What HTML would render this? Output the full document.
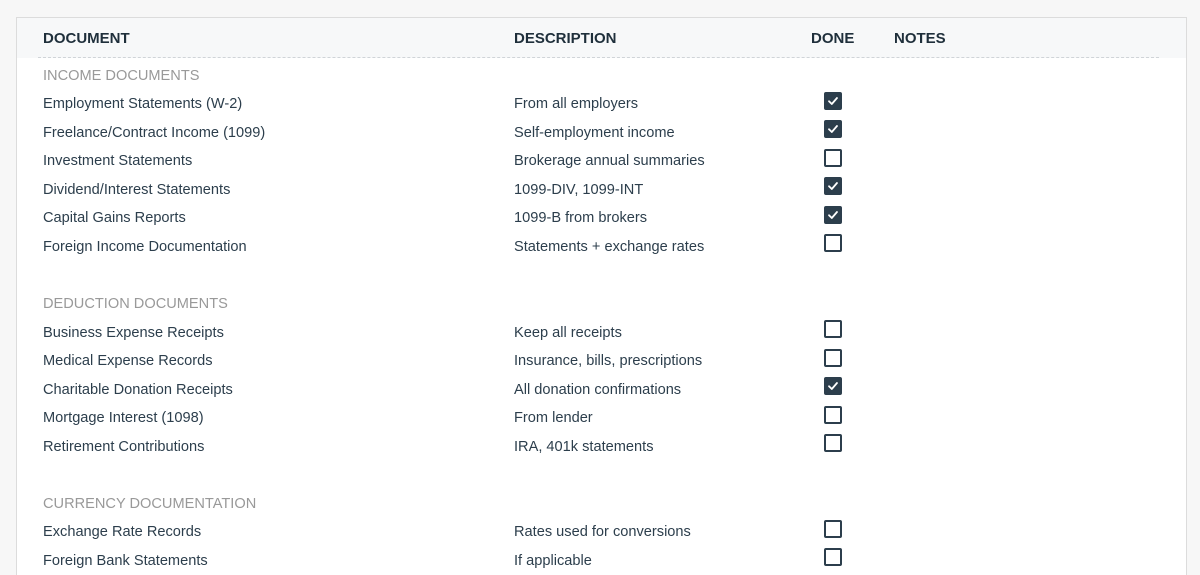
<!DOCTYPE html>
<html style="overflow:hidden;height:575px"><head><meta charset="utf-8"><style>
*{margin:0;padding:0;box-sizing:border-box}
body{width:1200px;height:575px;background:#f7f7f7;font-family:"Liberation Sans",sans-serif;overflow:hidden;position:relative}
.card{position:absolute;left:16px;top:17px;width:1171px;height:570px;background:#fff;border:1px solid #dcdcdc;border-bottom:none}
.head{position:absolute;left:0;top:0;width:100%;height:40px;background:#f7f8f9}
.dash{position:absolute;left:21px;top:39px;width:1121px;border-top:1px dashed #d0d4d8}
.t{position:absolute;font-size:14.6px;line-height:20px;color:#2c3e4c;white-space:nowrap;margin-top:1px}
.h{font-weight:bold;font-size:15px;color:#1f2f3b}
.s{color:#999}
.cb{position:absolute;left:807px;width:18px;height:18px;border:2px solid #2c3e4c;border-radius:2px;background:#fff}
.cb.on{background:#2c3e4c}
.cb.on svg{position:absolute;left:1px;top:1px}
</style></head><body>
<div class="card">
<div class="head"></div>
<div class="dash"></div>
<div class="t h" style="left:26px;top:10px">DOCUMENT</div>
<div class="t h" style="left:497px;top:10px">DESCRIPTION</div>
<div class="t h" style="left:794px;top:10px">DONE</div>
<div class="t h" style="left:877px;top:10px">NOTES</div>

<div class="t s" style="left:26px;top:47px">INCOME DOCUMENTS</div>
<div class="t" style="left:26px;top:75px">Employment Statements (W-2)</div><div class="t" style="left:497px;top:75px">From all employers</div>
<div class="t" style="left:26px;top:104px">Freelance/Contract Income (1099)</div><div class="t" style="left:497px;top:104px">Self-employment income</div>
<div class="t" style="left:26px;top:132px">Investment Statements</div><div class="t" style="left:497px;top:132px">Brokerage annual summaries</div>
<div class="t" style="left:26px;top:161px">Dividend/Interest Statements</div><div class="t" style="left:497px;top:161px">1099-DIV, 1099-INT</div>
<div class="t" style="left:26px;top:189px">Capital Gains Reports</div><div class="t" style="left:497px;top:189px">1099-B from brokers</div>
<div class="t" style="left:26px;top:218px">Foreign Income Documentation</div><div class="t" style="left:497px;top:218px">Statements + exchange rates</div>

<div class="t s" style="left:26px;top:275px">DEDUCTION DOCUMENTS</div>
<div class="t" style="left:26px;top:304px">Business Expense Receipts</div><div class="t" style="left:497px;top:304px">Keep all receipts</div>
<div class="t" style="left:26px;top:332px">Medical Expense Records</div><div class="t" style="left:497px;top:332px">Insurance, bills, prescriptions</div>
<div class="t" style="left:26px;top:361px">Charitable Donation Receipts</div><div class="t" style="left:497px;top:361px">All donation confirmations</div>
<div class="t" style="left:26px;top:389px">Mortgage Interest (1098)</div><div class="t" style="left:497px;top:389px">From lender</div>
<div class="t" style="left:26px;top:418px">Retirement Contributions</div><div class="t" style="left:497px;top:418px">IRA, 401k statements</div>

<div class="t s" style="left:26px;top:475px">CURRENCY DOCUMENTATION</div>
<div class="t" style="left:26px;top:503px">Exchange Rate Records</div><div class="t" style="left:497px;top:503px">Rates used for conversions</div>
<div class="t" style="left:26px;top:532px">Foreign Bank Statements</div><div class="t" style="left:497px;top:532px">If applicable</div>

<div class="cb on" style="top:74px"><svg width="12" height="12" viewBox="0 0 12 12"><path d="M2 6.2L4.8 9 10 3" stroke="#fff" stroke-width="1.8" fill="none" stroke-linecap="round" stroke-linejoin="round"/></svg></div>
<div class="cb on" style="top:102px"><svg width="12" height="12" viewBox="0 0 12 12"><path d="M2 6.2L4.8 9 10 3" stroke="#fff" stroke-width="1.8" fill="none" stroke-linecap="round" stroke-linejoin="round"/></svg></div>
<div class="cb" style="top:131px"></div>
<div class="cb on" style="top:159px"><svg width="12" height="12" viewBox="0 0 12 12"><path d="M2 6.2L4.8 9 10 3" stroke="#fff" stroke-width="1.8" fill="none" stroke-linecap="round" stroke-linejoin="round"/></svg></div>
<div class="cb on" style="top:188px"><svg width="12" height="12" viewBox="0 0 12 12"><path d="M2 6.2L4.8 9 10 3" stroke="#fff" stroke-width="1.8" fill="none" stroke-linecap="round" stroke-linejoin="round"/></svg></div>
<div class="cb" style="top:216px"></div>
<div class="cb" style="top:302px"></div>
<div class="cb" style="top:331px"></div>
<div class="cb on" style="top:359px"><svg width="12" height="12" viewBox="0 0 12 12"><path d="M2 6.2L4.8 9 10 3" stroke="#fff" stroke-width="1.8" fill="none" stroke-linecap="round" stroke-linejoin="round"/></svg></div>
<div class="cb" style="top:388px"></div>
<div class="cb" style="top:416px"></div>
<div class="cb" style="top:502px"></div>
<div class="cb" style="top:530px"></div>
</div>
</body></html>
